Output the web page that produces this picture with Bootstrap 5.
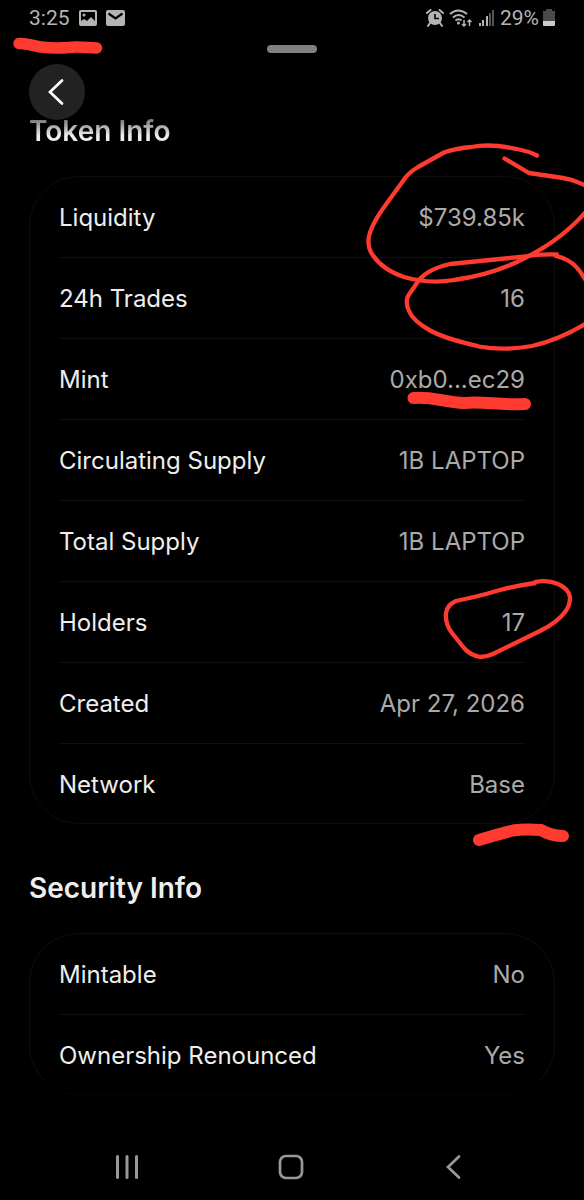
<!DOCTYPE html>
<html lang="en" data-bs-theme="dark">
<head>
<meta charset="utf-8">
<meta name="viewport" content="width=device-width, initial-scale=1">
<title>Token Info</title>
<link href="https://cdn.jsdelivr.net/npm/bootstrap@5.3.0/dist/css/bootstrap.min.css" rel="stylesheet">
<style>
  body { background: #000; color: #eee; font-family: "Inter", "Liberation Sans", sans-serif; overflow-x: hidden; }
  svg { display: block; flex: none; }
  .status-bar { height: 36px; padding: 0 29px; font: 21px/36px Roboto, sans-serif; color: #b4b4b4; }
  .sheet-top { height: 72px; padding-top: 9px; }
  .grabber { width: 50px; height: 8px; border-radius: 4px; background: #808080; }
  .back-btn { top: 64px; left: 29px; width: 56px; height: 56px; background: #222; z-index: 2; }
  .sheet-body { padding: 0 29px; }
  .section-title { font-size: 28px; line-height: 46px; font-weight: 600; color: #eee; margin: 0 0 22px; }
  .title-faded { background: linear-gradient(#777 25%, #eee 60%); -webkit-background-clip: text; background-clip: text; color: transparent; }
  .info-card { border: 1px solid #0d0d0d; border-radius: 50px; padding: 0 29px; margin-bottom: 41px; }
  .card-last { border-bottom-color: #060606; }
  .info-row { height: 81px; padding-top: 2px; font-size: 24px; line-height: 32px; border-bottom: 1px solid #0e0e0e; }
  .info-row:last-child { border-bottom: 0; height: 79px; }
  .info-row dt { font-weight: 400; color: #eee; }
  .info-row dd { margin: 0; color: #aaa; }
  .nav-keys { padding: 0 48px 0 45px; height: 66px; }
  .nav-keys .btn { height: 48px; }
  .ink { top: 0; z-index: 3; pointer-events: none; fill: none; stroke: #ff3b30; stroke-linecap: round; stroke-linejoin: round; }
</style>
</head>
<body>
<div class="position-relative min-vh-100 d-flex flex-column overflow-hidden">
  <header class="status-bar d-flex justify-content-between align-items-center">
    <div class="d-flex align-items-center">
      <span>3:25</span>
      <svg class="ms-2" width="20" height="18" viewBox="0 0 20 18"><path fill="#b4b4b4" fill-rule="evenodd" d="M3 1h14q2 0 2 2v12q0 2-2 2H3q-2 0-2-2V3q0-2 2-2zm0 2v9l3-2 3 2 4-4 4 4V3z"/><circle cx="6" cy="6" r="1.500" fill="#b4b4b4"/></svg>
      <svg class="ms-2" width="20" height="18" viewBox="0 0 20 18"><rect x="0" y="1" width="19" height="16" rx="2" fill="#b4b4b4"/><path d="M2.500 4.500l7 5 7-5" fill="none" stroke="#000" stroke-width="2.200"/></svg>
    </div>
    <div class="d-flex align-items-center">
      <svg width="18" height="20" viewBox="0 0 18 20"><circle cx="9" cy="10" r="7" fill="#b4b4b4"/><path d="M1 5l3.500-3M17 5l-3.500-3M4 15l-2 3M14 15l2 3" stroke="#b4b4b4" stroke-width="2" stroke-linecap="round"/><path d="M9 6v4.500h4" fill="none" stroke="#000" stroke-width="1.600"/></svg>
      <svg class="mx-1" width="26" height="20" viewBox="0 0 26 20"><g fill="none" stroke="#b4b4b4" stroke-width="2"><path d="M2 6q8-7 17 0M5 9.500q5.500-5 11.500 0M7.500 12.500q3-2.500 6 0"/></g><circle cx="10.500" cy="15" r="1.500" fill="#b4b4b4"/><path d="M16 12v6m-2-2l2 2 2-2M21.500 18v-6m-2 2l2-2 2 2" fill="none" stroke="#b4b4b4" stroke-width="1.500"/></svg>
      <svg class="me-1" width="18" height="18" viewBox="0 0 18 18"><g fill="#b4b4b4"><rect x="1" y="14" width="2" height="3"/><rect x="4" y="11" width="2" height="6"/><rect x="8" y="7" width="2" height="10"/></g><path fill="#555" d="M11 4h2v13h-2zM14 1h2v16h-2z"/></svg>
      <span>29%</span>
      <svg class="ms-1" width="12" height="18" viewBox="0 0 12 18"><path d="M3 0h6v2h3v10H0V2h3z" fill="#4a4a4a"/><path d="M0 12h12v4q0 1-1 1H1q-1 0-1-1z" fill="#ccc"/></svg>
    </div>
  </header>

  <div class="sheet-top"><div class="grabber mx-auto"></div></div>
  <button type="button" class="btn back-btn position-absolute rounded-circle border-0 p-0 d-flex align-items-center justify-content-center" aria-label="Back">
    <svg width="28" height="28" viewBox="0 0 28 28"><path d="M19 2.500L7 14 19 25.500" fill="none" stroke="#fff" stroke-width="2.700" stroke-linecap="round" stroke-linejoin="miter"/></svg>
  </button>

  <main class="sheet-body flex-grow-1">
    <h2 class="section-title title-faded">Token Info</h2>
    <dl class="info-card">
      <div class="info-row d-flex align-items-center justify-content-between"><dt>Liquidity</dt><dd>$739.85k</dd></div>
      <div class="info-row d-flex align-items-center justify-content-between"><dt>24h Trades</dt><dd>16</dd></div>
      <div class="info-row d-flex align-items-center justify-content-between"><dt>Mint</dt><dd>0xb0...ec29</dd></div>
      <div class="info-row d-flex align-items-center justify-content-between"><dt>Circulating Supply</dt><dd>1B LAPTOP</dd></div>
      <div class="info-row d-flex align-items-center justify-content-between"><dt>Total Supply</dt><dd>1B LAPTOP</dd></div>
      <div class="info-row d-flex align-items-center justify-content-between"><dt>Holders</dt><dd>17</dd></div>
      <div class="info-row d-flex align-items-center justify-content-between"><dt>Created</dt><dd>Apr 27, 2026</dd></div>
      <div class="info-row d-flex align-items-center justify-content-between"><dt>Network</dt><dd>Base</dd></div>
    </dl>
    <h2 class="section-title">Security Info</h2>
    <dl class="info-card card-last mb-0">
      <div class="info-row d-flex align-items-center justify-content-between"><dt>Mintable</dt><dd>No</dd></div>
      <div class="info-row d-flex align-items-center justify-content-between"><dt>Ownership Renounced</dt><dd>Yes</dd></div>
    </dl>
  </main>

  <nav class="nav-keys d-flex align-items-center" aria-label="System">
    <button type="button" class="btn flex-fill border-0 p-0 d-flex align-items-center justify-content-center" aria-label="Recents"><svg width="26" height="26" viewBox="0 0 26 26"><path d="M3.500 2.500v21M13 2.500v21M22.500 2.500v21" stroke="#999" stroke-width="3" stroke-linecap="round"/></svg></button>
    <button type="button" class="btn flex-fill border-0 p-0 d-flex align-items-center justify-content-center" aria-label="Home"><svg width="26" height="26" viewBox="0 0 26 26"><rect x="2" y="2" width="22" height="22" rx="6" fill="none" stroke="#999" stroke-width="2.700"/></svg></button>
    <button type="button" class="btn flex-fill border-0 p-0 d-flex align-items-center justify-content-center" aria-label="Back key"><svg width="26" height="26" viewBox="0 0 26 26"><path d="M18 2.500L7 13l11 10.500" fill="none" stroke="#999" stroke-width="2.700" stroke-linecap="round"/></svg></button>
  </nav>

  <!-- Red marker strokes laid over the screen -->
  <svg class="ink position-absolute start-0" width="120" height="70" viewBox="0 0 120 70"><path stroke-width="11.500" d="M19 43.500C28 43 32 46 41 47C50 48 59 48.500 68 47.500C78 46 86 47.500 96.500 48"/></svg>
  <svg class="ink position-absolute end-0" width="224" height="860" viewBox="360 0 224 860">
    <g stroke-width="4.300">
      <path d="M537 155.500Q528 151 519 149.500C510 147.500 500 145.500 488 145.500Q479 145.500 471 147Q453 149 444 152.500L418 167Q408 173 403 181L387 203Q370 226 368.500 239Q368 248 372 254C380 266 390 272 404 277C418 281 436 283 454 280C475 277 500 270 517 262C540 251 566 236 590 207"/>
      <path d="M504.500 158.500L529 173L563 178Q576 180 590 188"/>
      <path d="M557 254.500Q537 254 525 256.500L490 260L450 264C432 268 424 274 419 280L408 296Q405 302 409 311Q413 321 431 331C448 340 463 342 479 346.500C497 350 515 349 532 346Q562 339 590 321"/>
      <path d="M556 256C574 260 581 271 590 288"/>
      <path d="M535 583Q515 586 500 590Q487 594 474 597L456 601Q447 605 446 613Q445 624 452 633L464 648Q470 655 480 657Q487 657 494 653.500L540 631Q558 622 565 612Q570 606 570 597Q569 589 558 584Q548 579.500 535 582"/>
    </g>
    <g stroke-width="12">
      <path d="M413.500 398C430 396 444 402 464 403C483 401 500 405.500 525 404"/>
      <path d="M479 840Q495 835 513 830.500Q523 829 541 830Q551 836 563 836"/>
    </g>
  </svg>
</div>
<script src="https://cdn.jsdelivr.net/npm/bootstrap@5.3.0/dist/js/bootstrap.bundle.min.js"></script>
</body>
</html>
